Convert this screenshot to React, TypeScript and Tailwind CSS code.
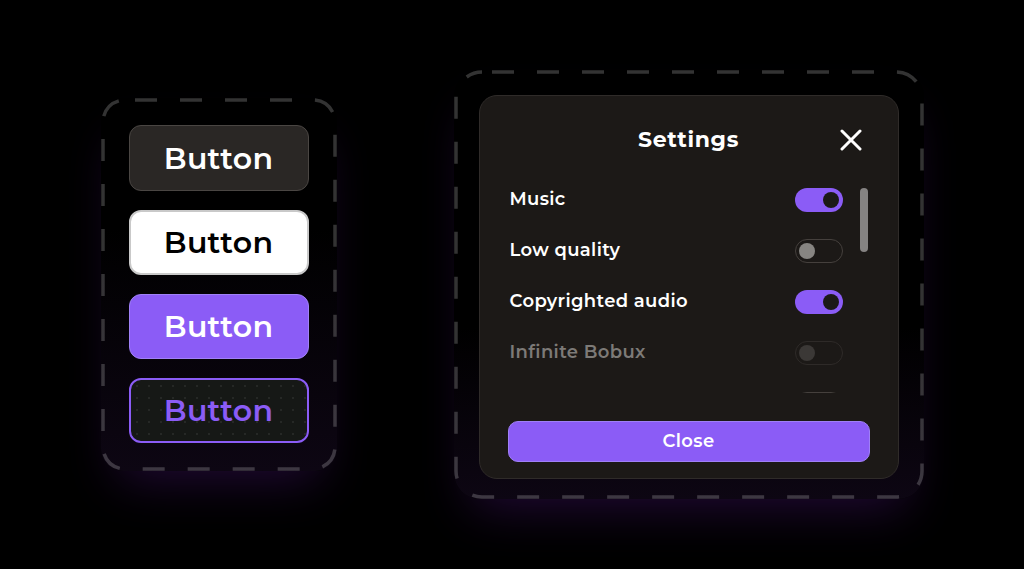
import React from "react";

const font = { fontFamily: '"Montserrat", Inter, "Noto Sans", sans-serif' };

function DashedFrame({ w, h, r }: { w: number; h: number; r: number }) {
    return (
        <svg className="pointer-events-none absolute inset-0" width={w} height={h}>
            <rect
                x={2}
                y={2}
                width={w - 4}
                height={h - 4}
                rx={r}
                fill="none"
                stroke="rgba(255,255,255,0.2)"
                strokeWidth={3.5}
                strokeDasharray="22 23"
                strokeDashoffset={-10}
            />
        </svg>
    );
}

function Toggle({ on, disabled }: { on?: boolean; disabled?: boolean }) {
    if (on) {
        return (
            <div className="flex h-[24px] w-[48px] items-center justify-end rounded-full bg-[#8b5cf6] pr-[4px]">
                <div className="h-[16px] w-[16px] rounded-full bg-[#1c1917]" />
            </div>
        );
    }
    return (
        <div
            className={
                disabled
                    ? "flex h-[24px] w-[48px] items-center rounded-full border border-[#2e2a28] pl-[3px]"
                    : "flex h-[24px] w-[48px] items-center rounded-full border border-[#45403d] pl-[3px]"
            }
        >
            <div
                className={
                    disabled
                        ? "h-[16px] w-[16px] rounded-full bg-[#3b3836]"
                        : "h-[16px] w-[16px] rounded-full bg-[#878582]"
                }
            />
        </div>
    );
}

function Row({ label, on, disabled }: { label?: string; on?: boolean; disabled?: boolean }) {
    return (
        <div className="flex h-[51px] shrink-0 items-center justify-between">
            <span
                className={
                    disabled
                        ? "text-[18px] font-semibold tracking-[0.02em] text-[#7d7a77]"
                        : "text-[18px] font-semibold tracking-[0.02em] text-white"
                }
            >
                {label}
            </span>
            <Toggle on={on} disabled={disabled} />
        </div>
    );
}

const btn = "flex h-[65px] items-center justify-center rounded-[12px] text-[30px] font-semibold tracking-[0.01em]";

export default function App() {
    return (
        <div
            className="flex h-[569px] w-[1024px] items-center justify-center gap-[117px] overflow-hidden bg-black"
            style={font}
        >
            {/* button stack */}
            <div className="relative h-[373px] w-[236px] rounded-[22px] bg-[linear-gradient(to_bottom,transparent_35%,#0d0613_100%)] shadow-[0_26px_50px_-18px_rgba(45,14,72,0.75)]">
                <DashedFrame w={236} h={373} r={22} />
                <div className="flex flex-col gap-[19px] px-[28px] py-[27px]">
                    <div className={btn + " h-[66px] border border-[#4a4643] bg-[#2a2725] text-white"}>Button</div>
                    <div className={btn + " border-2 border-[#c9c9c9] bg-white text-black"}>Button</div>
                    <div className={btn + " border border-[#a081f7] bg-[#8b5cf6] text-white"}>Button</div>
                    <div
                        className={
                            btn +
                            " border-2 border-[#8b5cf6] bg-[#161816] bg-[radial-gradient(rgba(255,255,255,0.07)_1px,transparent_1.5px)] bg-[size:12px_12px] text-[#8b5cf6]"
                        }
                    >
                        Button
                    </div>
                </div>
            </div>

            {/* settings dialog */}
            <div className="relative h-[429px] w-[470px] rounded-[26px] bg-[linear-gradient(to_bottom,transparent_60%,#0d0613_100%)] shadow-[0_26px_50px_-18px_rgba(45,14,72,0.75)]">
                <DashedFrame w={470} h={429} r={26} />
                <div className="px-[25px] pt-[25px]">
                    <div className="flex h-[384px] flex-col rounded-[18px] border border-[#2f2b29] bg-[#1c1917] px-[28px] pb-[16px]">
                        <div className="relative flex items-center justify-center pt-[30px]">
                            <h1 className="text-[22px] font-bold leading-[28px] tracking-[0.03em] text-white">Settings</h1>
                            <svg
                                className="absolute right-[8px] top-[33px]"
                                width="22"
                                height="22"
                                viewBox="0 0 22 22"
                                fill="none"
                                stroke="white"
                                strokeWidth="3"
                                strokeLinecap="round"
                            >
                                <path d="M2 2 L20 20 M20 2 L2 20" />
                            </svg>
                        </div>
                        <div className="mt-[20px] flex h-[221px] gap-[17px] overflow-hidden pl-[2px] pr-[2px]">
                            <div className="flex flex-1 flex-col">
                                <Row label="Music" on />
                                <Row label="Low quality" />
                                <Row label="Copyrighted audio" on />
                                <Row label="Infinite Bobux" disabled />
                                <Row />
                            </div>
                            <div className="w-[8px] pt-[14px]">
                                <div className="h-[64px] w-[8px] rounded-full bg-[#858382]" />
                            </div>
                        </div>
                        <button className="mt-[28px] flex h-[41px] items-center justify-center rounded-[10px] border border-[#9f80f7] bg-[#8b5cf6] text-[18px] font-semibold tracking-[0.02em] text-white">
                            Close
                        </button>
                    </div>
                </div>
            </div>
        </div>
    );
}
